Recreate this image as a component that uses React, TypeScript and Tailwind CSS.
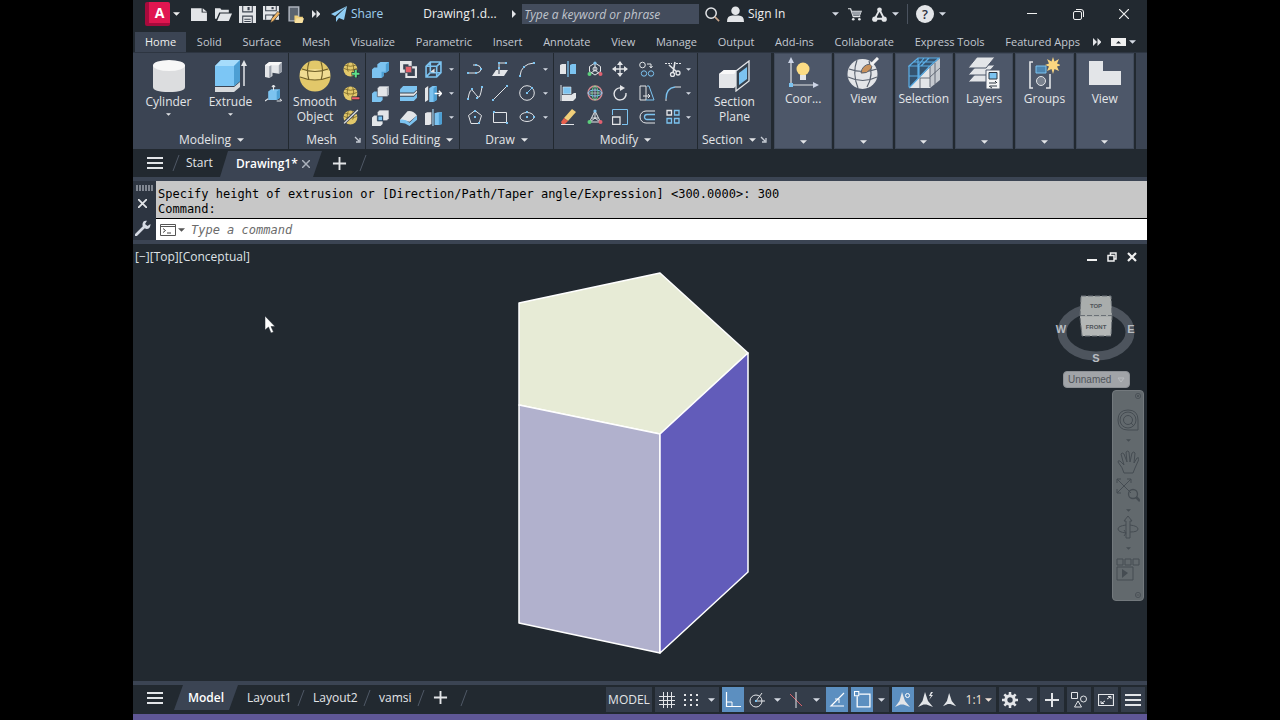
import { useState } from "react";
import type { ReactNode } from "react";
import clsx from "clsx";

interface IconProps {
  children: ReactNode;
  className?: string;
  box?: string;
}

interface ToolItem {
  label: string;
  icon: ReactNode;
}

const LIGHT = "#e3e5e8";
const BLUE = "#7cc3f0";
const GOLD = "#e2c86a";

function Icon({ children, className = "size-4", box = "0 0 16 16" }: IconProps) {
  return (
    <svg viewBox={box} className={clsx("shrink-0", className)} fill="none" stroke="none" aria-hidden="true">
      {children}
    </svg>
  );
}

function Caret({ className = "w-[5px] h-[3px]" }: { className?: string }) {
  return (
    <svg viewBox="0 0 8 4" className={clsx("shrink-0", className)} fill="currentColor" aria-hidden="true">
      <path d="M0 0h8L4 4z" />
    </svg>
  );
}

function CaretButton({ label, className }: { label: string; className?: string }) {
  return (
    <button aria-label={label} className={clsx("flex items-center justify-center text-[#d5dae3]", className)}>
      <Caret className="h-1 w-[7px]" />
    </button>
  );
}

function Slash({ className = "h-5" }: { className?: string }) {
  return (
    <svg viewBox="0 0 8 20" className={clsx("w-2 shrink-0", className)} fill="none" stroke="#4f5866" aria-hidden="true">
      <path d="M7 2L1 18" />
    </svg>
  );
}

function Plus({ className = "size-[15px]" }: { className?: string }) {
  return (
    <Icon className={className}>
      <path d="M8 1v14M1 8h14" stroke="#e3e5e8" strokeWidth="2" />
    </Icon>
  );
}

function MenuLines({ className = "size-4" }: { className?: string }) {
  return (
    <Icon className={className}>
      <path d="M0 3h16M0 8h16M0 13h16" stroke="#e3e5e8" strokeWidth="2" />
    </Icon>
  );
}

const dots = (points: number[][]) =>
  points.map(([x, y]) => <rect key={`${x}-${y}`} x={x - 1} y={y - 1} width="2" height="2" fill={BLUE} />);

const globe = (
  <>
    <circle cx="7" cy="8" r="6.5" fill={GOLD} />
    <path d="M1 7q6 3 12 0M2 4q5 2 10 0M5 2q-2 5 0 8M9 2q2 5 0 8" stroke="#7d6a2a" strokeWidth=".8" />
  </>
);

const QUICK_ACCESS: ToolItem[] = [
  {
    label: "New",
    icon: (
      <Icon className="size-[17px]">
        <path d="M0 2h10v4h5v8H0z" fill={LIGHT} />
        <path d="M11 2l4 3.500h-4z" fill={LIGHT} />
      </Icon>
    ),
  },
  {
    label: "Open",
    icon: (
      <Icon className="size-[17px]">
        <path d="M0 2h5l1 1.500h7V6H4l-2.500 6L0 12z" fill={LIGHT} />
        <path d="M5 7h11l-3 7H2z" fill={LIGHT} />
      </Icon>
    ),
  },
  {
    label: "Save",
    icon: (
      <Icon className="size-[17px]">
        <path d="M0 0h16v16H0z" fill={LIGHT} />
        <path d="M3 0h10v6H3zM3 9h10v7H3z" fill="#3a424e" />
        <path d="M4 0h8v5H4zM4 10h8v6H4z" fill={LIGHT} />
        <path d="M8 1h2v3H8zM5 12h6v1H5zM5 14h6v1H5z" fill="#3a424e" />
      </Icon>
    ),
  },
  {
    label: "Save As",
    icon: (
      <Icon className="size-[17px]">
        <path d="M0 0h15v13H0z" fill={LIGHT} />
        <path d="M2 0h11v5H2zM2 8h10v5H2z" fill="#3a424e" />
        <path d="M3 0h9v4H3zM3 9h6v4H3z" fill={LIGHT} />
        <path d="M8 1h2v2H8z" fill="#3a424e" />
        <path d="M14 5l2 2-6 7-3 2 1-4z" fill="#f0b566" stroke="#222930" strokeWidth=".6" />
      </Icon>
    ),
  },
  {
    label: "Open from Web & Mobile",
    icon: (
      <Icon className="size-[17px]">
        <path d="M2 1h9v13H2z" fill="#5b646f" stroke="#aeb4bd" strokeWidth="1.400" />
        <path d="M7 9h3l1 1h4v5H7z" fill="#f0d07a" />
        <path d="M9 11.500h7L14.500 16H7z" fill="#f7e0a0" />
      </Icon>
    ),
  },
];

const MENU_TABS = [
  "Home",
  "Solid",
  "Surface",
  "Mesh",
  "Visualize",
  "Parametric",
  "Insert",
  "Annotate",
  "View",
  "Manage",
  "Output",
  "Add-ins",
  "Collaborate",
  "Express Tools",
  "Featured Apps",
];

const MODELING_SMALL: ToolItem[] = [
  {
    label: "Polysolid",
    icon: (
      <Icon className="size-[17px]">
        <path d="M0 4l4-3h12v9l-3 2-6-1v3l-3 2-4-1z" fill={LIGHT} />
        <path d="M0 4l4-3h12l-3 3H6L4 5z" fill="#f7f7f7" />
        <path d="M4 5l2-1v10l-2 2zM13 4l3-3v9l-3 2z" fill="#9ba1ab" />
      </Icon>
    ),
  },
  {
    label: "Presspull",
    icon: (
      <Icon className="size-[17px]">
        <path d="M3 6l3-2h8v8l-3 2H3z" fill={BLUE} />
        <path d="M11 6l3-2v8l-3 2z" fill="#4d9fd3" />
        <path d="M8 5V0M6.500 2L8 0l1.500 2M0 15l3-2M11 15h4M14 13l2 2" stroke={LIGHT} />
      </Icon>
    ),
  },
];

const MESH_SMALL: ToolItem[] = [
  {
    label: "Smooth More",
    icon: (
      <Icon className="size-[17px]">
        {globe}
        <path d="M12 8v8M8 12h8" stroke="#222930" strokeWidth="3.500" />
        <path d="M12 8.500v7M8.500 12h7" stroke="#5fe08a" strokeWidth="2" />
      </Icon>
    ),
  },
  {
    label: "Smooth Less",
    icon: (
      <Icon className="size-[17px]">
        {globe}
        <path d="M8 12.500h8" stroke="#222930" strokeWidth="3.500" />
        <path d="M8.500 12.500h7" stroke="#f0606c" strokeWidth="2" />
      </Icon>
    ),
  },
  {
    label: "Refine Mesh",
    icon: (
      <Icon className="size-[17px]">
        {globe}
        <path d="M0 14L14 1" stroke="#3b4453" strokeWidth="3" />
        <path d="M1 13.500L14 1" stroke={LIGHT} strokeWidth="1.200" />
      </Icon>
    ),
  },
];

const SOLID_TOOLS: ToolItem[][] = [
  [
    {
      label: "Union",
      icon: (
        <Icon className="size-[17px]">
          <path d="M0 8l2-2h3V3l3-2h8v8l-3 2h-2v3l-2 2H0z" fill={BLUE} />
          <path d="M13 3l3-2v8l-3 2h-2v3l-2 2v-6h4z" fill="#4d9fd3" />
        </Icon>
      ),
    },
    {
      label: "Interfere",
      icon: (
        <Icon className="size-[17px]">
          <path d="M0 0h11v11H0zM3 3v5h5V3z" fill={LIGHT} fillRule="evenodd" />
          <path d="M6 6h9v9H6z" stroke={LIGHT} strokeWidth="2" />
          <path d="M5 5h6v6H5z" fill="#e4606a" stroke="#3b4453" strokeWidth=".8" />
        </Icon>
      ),
    },
    {
      label: "Extract Edges",
      icon: (
        <Icon className="size-[17px]">
          <path d="M1 5l4-4h10v10l-4 4H1zM1 5h10v10M11 5l4-4M5 1v9M5 11h10M5 11l-4 4" stroke={BLUE} strokeWidth="1.500" />
          <path d="M5 10l4-3v4z" fill={LIGHT} />
        </Icon>
      ),
    },
  ],
  [
    {
      label: "Subtract",
      icon: (
        <Icon className="size-[17px]">
          <path d="M0 8l2-2h8v8l-2 2H0z" fill={BLUE} />
          <path d="M5 3l2-2h9v8l-2 2H5z" fill={LIGHT} stroke="#3b4453" strokeWidth=".6" />
          <path d="M14 3l2-2v8l-2 2z" fill="#aab0b9" />
        </Icon>
      ),
    },
    {
      label: "Slice",
      icon: (
        <Icon className="size-[17px]">
          <path d="M0 4l3-3h13v3l-3 3H0z" fill={BLUE} />
          <path d="M0 8h13l3-3v2l-3 3H0z" fill={LIGHT} />
          <path d="M0 11h13l3-3v4l-3 3H0z" fill={BLUE} />
        </Icon>
      ),
    },
    {
      label: "Extrude Faces",
      icon: (
        <Icon className="size-[17px]">
          <path d="M0 3l3-2v13l-3 2z" fill={LIGHT} />
          <path d="M4 3l3-2h4v13l-3 2H4z" fill={BLUE} />
          <path d="M8 3l3-2v13l-3 2z" fill="#4d9fd3" />
          <path d="M9 8h6M13 5.500L15.500 8 13 10.500" stroke="#fff" strokeWidth="1.400" />
        </Icon>
      ),
    },
  ],
  [
    {
      label: "Intersect",
      icon: (
        <Icon className="size-[17px]">
          <path d="M0 8l2-2h8v8l-2 2H0z" fill={LIGHT} />
          <path d="M5 3l2-2h9v8l-2 2H5z" fill={LIGHT} stroke="#3b4453" strokeWidth=".6" />
          <path d="M5.500 6.500H10V11H5.500z" fill={BLUE} stroke="#25405a" />
        </Icon>
      ),
    },
    {
      label: "Thicken",
      icon: (
        <Icon className="size-[17px]">
          <path d="M0 10l7-8q5-1 9 4l-7 6z" fill={LIGHT} />
          <path d="M0 10q5-1 9 3l7-7v4l-7 6q-4-3-9-3z" fill={BLUE} />
        </Icon>
      ),
    },
    {
      label: "Separate",
      icon: (
        <Icon className="size-[17px]">
          <path d="M0 4l2-1h4v11l-2 1H0z" fill={LIGHT} />
          <path d="M9 4l3-1h4v11l-3 1H9z" fill={BLUE} />
          <path d="M7.500 0v16" stroke="#aee0ff" />
          <path d="M13 4l3-1v11l-3 1z" fill="#4d9fd3" />
        </Icon>
      ),
    },
  ],
];

const DRAW_TOOLS: ToolItem[][] = [
  [
    {
      label: "Polyline",
      icon: (
        <Icon>
          <path d="M1 12h9q4-1 4-4t-4-4H6" stroke={LIGHT} />
          {dots([[1, 12], [9, 12], [14, 8], [9, 4]])}
        </Icon>
      ),
    },
    {
      label: "3D Polyline",
      icon: (
        <Icon>
          <path d="M4 9h12l-4 6H0z" fill={LIGHT} />
          <path d="M7 12V2h8" stroke={LIGHT} />
          <path d="M7 9v4" stroke="#3b4453" />
          {dots([[7, 2], [14, 2], [7, 7]])}
        </Icon>
      ),
    },
    {
      label: "Arc",
      icon: (
        <Icon>
          <path d="M1 15Q2 3 15 2" stroke={LIGHT} />
          {dots([[1, 15], [5, 6], [15, 2]])}
        </Icon>
      ),
    },
  ],
  [
    {
      label: "Spline",
      icon: (
        <Icon>
          <path d="M1 14Q3 2 6 6t5 6 4-10" stroke={LIGHT} />
          {dots([[1, 14], [5, 4], [10, 13], [15, 2]])}
        </Icon>
      ),
    },
    {
      label: "Line",
      icon: (
        <Icon>
          <path d="M1 15L15 1" stroke={LIGHT} />
          {dots([[1, 15], [15, 1]])}
        </Icon>
      ),
    },
    {
      label: "Circle",
      icon: (
        <Icon>
          <circle cx="8" cy="8" r="7.300" stroke={LIGHT} />
          <path d="M8 8l4-4" stroke={BLUE} />
          {dots([[8, 8], [13, 3]])}
        </Icon>
      ),
    },
  ],
  [
    {
      label: "Polygon",
      icon: (
        <Icon>
          <path d="M8 1.500l6.500 5-2.500 8H4L1.500 6.500z" stroke={LIGHT} />
          {dots([[8, 2], [8, 8], [12, 14]])}
        </Icon>
      ),
    },
    {
      label: "Rectangle",
      icon: (
        <Icon>
          <path d="M1.500 3.500h13v10h-13z" stroke={LIGHT} />
          {dots([[2, 3], [15, 14]])}
        </Icon>
      ),
    },
    {
      label: "Ellipse",
      icon: (
        <Icon>
          <ellipse cx="8" cy="8" rx="7" ry="4.500" stroke={LIGHT} />
          {dots([[8, 8], [8, 3], [15, 8]])}
        </Icon>
      ),
    },
  ],
];

const MODIFY_TOOLS: ToolItem[][] = [
  [
    {
      label: "3D Mirror",
      icon: (
        <Icon>
          <path d="M0 4l2-1h4v10H0z" fill={LIGHT} />
          <path d="M10 4l2-1h4v10h-6z" fill={BLUE} />
          <path d="M8 0v16" stroke={BLUE} strokeWidth="1.300" />
        </Icon>
      ),
    },
    {
      label: "3D Move",
      icon: (
        <Icon>
          <path d="M8 2l5.500 3.500v5L8 14l-5.500-3.500v-5zM8 2v7M8 9l-5 4M8 9l5 4" stroke={LIGHT} />
          <circle cx="8" cy="2" r="1.600" fill={BLUE} />
          <circle cx="2.500" cy="13" r="2" fill="#5bcf7b" />
          <circle cx="13.500" cy="13" r="2" fill="#e06070" />
          <circle cx="8" cy="8" r="2" stroke={LIGHT} />
        </Icon>
      ),
    },
    {
      label: "Move",
      icon: (
        <Icon>
          <path d="M8 1v14M1 8h14" stroke={LIGHT} strokeWidth="1.300" />
          <path d="M8 0l3 4H5zM8 16l3-4H5zM0 8l4-3v6zM16 8l-4-3v6z" fill={LIGHT} />
        </Icon>
      ),
    },
    {
      label: "Copy",
      icon: (
        <Icon>
          <circle cx="3.500" cy="4" r="2.800" stroke={LIGHT} />
          <circle cx="5" cy="12.500" r="2.700" stroke={BLUE} />
          <circle cx="12" cy="12.500" r="2.700" stroke={BLUE} />
          <path d="M8 3h4v3M10.500 5l1.500 2 1.500-2" stroke={LIGHT} />
        </Icon>
      ),
    },
    {
      label: "Trim",
      icon: (
        <Icon>
          <path d="M0 2.500h7M11 2.500h5" stroke={LIGHT} strokeDasharray="2 1" />
          <path d="M4 4l8 7M10 1L8 12" stroke={LIGHT} strokeWidth="1.600" />
          <circle cx="7.500" cy="13.500" r="2" stroke={LIGHT} strokeWidth="1.300" />
          <circle cx="13" cy="12" r="2" stroke={LIGHT} strokeWidth="1.300" />
        </Icon>
      ),
    },
  ],
  [
    {
      label: "3D Align",
      icon: (
        <Icon>
          <path d="M1 0v16" stroke={LIGHT} />
          <path d="M3 2h8v7H3z" fill={BLUE} stroke={LIGHT} strokeWidth=".6" />
          <path d="M2 10h9l3-2h2v5l-3 3H2z" fill={LIGHT} />
        </Icon>
      ),
    },
    {
      label: "3D Rotate",
      icon: (
        <Icon>
          <circle cx="8" cy="8" r="7" stroke="#d58a90" strokeWidth="1.300" />
          <ellipse cx="8" cy="8" rx="3" ry="7" stroke="#5bcf7b" />
          <ellipse cx="8" cy="8" rx="7" ry="3" stroke={BLUE} />
          <path d="M8 1v14M1 8h14" stroke={LIGHT} strokeWidth=".6" />
        </Icon>
      ),
    },
    {
      label: "Rotate",
      icon: (
        <Icon>
          <path d="M9 3A6 6 0 1 0 14 8" stroke={LIGHT} strokeWidth="1.400" />
          <path d="M8 0l5 3-5 3z" fill={LIGHT} />
        </Icon>
      ),
    },
    {
      label: "Stretch",
      icon: (
        <Icon>
          <path d="M1 1h6v14H1z" stroke={LIGHT} />
          <path d="M8 1h2l5 14H7" stroke={BLUE} />
          <path d="M4 11h7M9 9l2 2-2 2" stroke={LIGHT} />
        </Icon>
      ),
    },
    {
      label: "Fillet",
      icon: (
        <Icon>
          <path d="M1 14Q1 3 10 2" stroke={BLUE} strokeWidth="1.300" />
          <path d="M1 14v2M10 2h6" stroke={LIGHT} />
        </Icon>
      ),
    },
  ],
  [
    {
      label: "Erase",
      icon: (
        <Icon>
          <path d="M12 0l4 3-8 9-4-3z" fill="#f1cf7a" />
          <path d="M4 9l4 3-3 3H2l-1-2z" fill="#e8604c" />
          <path d="M1 15.500h13" stroke={LIGHT} />
        </Icon>
      ),
    },
    {
      label: "3D Scale",
      icon: (
        <Icon>
          <path d="M8 2L2.500 13h11zM8 2v7M8 9l-5 4M8 9l5 4M5 9h6" stroke={LIGHT} />
          <circle cx="8" cy="2" r="1.600" fill={BLUE} />
          <circle cx="2.500" cy="13" r="2" fill="#5bcf7b" />
          <circle cx="13.500" cy="13" r="2" fill="#e06070" />
        </Icon>
      ),
    },
    {
      label: "Scale",
      icon: (
        <Icon>
          <path d="M.5 6V.5h15v15H10" stroke={BLUE} />
          <path d="M.5 8h7.500v7.500H.5z" stroke={LIGHT} strokeWidth="1.300" />
        </Icon>
      ),
    },
    {
      label: "Offset",
      icon: (
        <Icon>
          <path d="M16 2H7a6 6 0 0 0 0 12h9" stroke={LIGHT} />
          <path d="M16 5.500H8a2.500 2.500 0 0 0 0 5h8" stroke={BLUE} strokeWidth="1.300" />
        </Icon>
      ),
    },
    {
      label: "Array",
      icon: (
        <Icon>
          <path d="M2 1.500h4.500V6H2z" stroke={LIGHT} strokeWidth="1.300" />
          <path d="M9.500 1.500H14V6H9.500zM2 9.500h4.500V14H2zM9.500 9.500H14V14H9.500z" stroke={BLUE} strokeWidth="1.300" />
        </Icon>
      ),
    },
  ],
];

const COLLAPSED_PANELS: ToolItem[] = [
  {
    label: "Coor...",
    icon: (
      <Icon className="size-8" box="0 0 32 32">
        <path d="M4 28V4M4 28h25" stroke={LIGHT} strokeWidth="1.200" />
        <path d="M4 0l3 6H1zM32 28l-6-3v6z" fill="#cdd5e6" />
        <path d="M2 26h4v4H2z" fill={BLUE} />
        <circle cx="16" cy="12" r="6.500" fill="#fcdc84" />
        <path d="M13 18h6v5h-6z" fill={LIGHT} />
      </Icon>
    ),
  },
  {
    label: "View",
    icon: (
      <Icon className="size-8" box="0 0 32 32">
        <circle cx="15.500" cy="17" r="15" fill={LIGHT} />
        <path d="M2 12q14 5 28 0M1 20q15 7 29 0M10 3q-5 13 1 28M22 4q5 14-2 26" stroke="#59616e" strokeWidth="1.200" />
        <path d="M14 16q1-8 9-9 3 2 1 5-4 5-10 4z" fill="#c9925c" stroke="#59616e" />
        <path d="M24 8l7-7" stroke="#f4f4f4" strokeWidth="3" />
      </Icon>
    ),
  },
  {
    label: "Selection",
    icon: (
      <Icon className="size-8" box="0 0 32 32">
        <path d="M1 9l9-8h21l-9 8-21 22z" fill="#35536f" />
        <path d="M1 31L22 10v21z" fill={LIGHT} />
        <path d="M22 10l10-9v22l-10 8z" fill="#c5c9cf" />
        <path d="M1 9l9-8h21l-9 8zM1 9v21M11 9v12M22 9L1 31M1 19h11M5 5h21M16 1l-6 8M21 1l-8 8M10 1v21" stroke="#5caee6" strokeWidth="1.200" />
        <path d="M22 10v20M12 21h10M12 21v10M22 20l10-9M27 6v21" stroke="#59616e" strokeWidth=".9" />
      </Icon>
    ),
  },
  {
    label: "Layers",
    icon: (
      <Icon className="size-8" box="0 0 32 32">
        <path d="M9 15h18l-9 10H0z" fill={LIGHT} stroke="#4d5769" />
        <path d="M9 8h18l-9 10H0z" fill={LIGHT} stroke="#4d5769" />
        <path d="M9 0h18l-9 11H0z" fill={LIGHT} stroke="#4d5769" />
        <path d="M18 13h14v19H18z" fill="#f4f5f6" stroke="#4d5769" />
        <path d="M21 15.500h8V22h-8z" fill={BLUE} stroke="#2b3440" />
        <path d="M21 26h7M27 24l2 2M22 29h7M24 31l-3-2" stroke="#2b3440" />
      </Icon>
    ),
  },
  {
    label: "Groups",
    icon: (
      <Icon className="size-8" box="0 0 32 32">
        <path d="M5 5H2v26h3M18 31h4V17" stroke={LIGHT} strokeWidth="1.600" />
        <path d="M8 9h10v7H8z" fill="#4d85b0" stroke={BLUE} />
        <circle cx="13" cy="24" r="4.500" fill="#7a828f" stroke={LIGHT} />
        <path d="M25 0l1.500 4.500L31 2l-2 4.500 4 1.500-4 1.500 2 4.500-4.500-2L25 17l-1.500-5L19 14l2-4.500L17 8l4-1.500L19 2l4.500 2.500z" fill="#fbd680" />
      </Icon>
    ),
  },
  {
    label: "View",
    icon: (
      <Icon className="size-8" box="0 0 32 32">
        <path d="M0 4h14v10h18v14H0z" fill={LIGHT} />
      </Icon>
    ),
  },
];

function ToolGrid({ rows, columns }: { rows: ToolItem[][]; columns: string }) {
  return (
    <div className="flex flex-col">
      {rows.map((row) => (
        <div key={row[0].label} className={clsx("grid h-6 items-center justify-items-center", columns)}>
          {row.map((tool) => (
            <button key={tool.label} aria-label={tool.label}>
              {tool.icon}
            </button>
          ))}
          <button aria-label={`More like ${row[row.length - 1].label}`} className="text-[#d5dae3]">
            <Caret />
          </button>
        </div>
      ))}
    </div>
  );
}

function SmallColumn({ tools }: { tools: ToolItem[] }) {
  return (
    <div className="flex w-6 flex-col">
      {tools.map((tool) => (
        <button key={tool.label} aria-label={tool.label} className="flex h-6 items-center justify-center">
          {tool.icon}
        </button>
      ))}
    </div>
  );
}

interface PanelProps {
  title: string;
  children: ReactNode;
  className?: string;
  expandable?: boolean;
  launcher?: boolean;
}

function Panel({ title, children, className, expandable, launcher }: PanelProps) {
  return (
    <section className={clsx("flex shrink-0 flex-col justify-between bg-[#3b4453] pt-1", className)}>
      <div className="flex justify-center">{children}</div>
      <div className="flex h-[19px] items-center">
        <button className="flex flex-1 items-center justify-center gap-[6px] whitespace-nowrap text-[#e3e5e8]">
          {title}
          {expandable && <Caret className="h-1 w-[7px]" />}
        </button>
        {launcher && (
          <button aria-label={`${title} settings`} className="pr-1">
            <Icon className="size-[7px]" box="0 0 7 7">
              <path d="M1 1l4 4M6 2v4H2" stroke="#c8cdd6" strokeWidth="1.300" />
            </Icon>
          </button>
        )}
      </div>
    </section>
  );
}

function BigTool({ label, icon, className, menu }: ToolItem & { className?: string; menu?: boolean }) {
  return (
    <button className={clsx("flex flex-col items-center pt-[3px] text-[#e3e5e8]", className)}>
      {icon}
      <span className="mt-[2px] leading-[15px]">{label}</span>
      {menu && <Caret className="mt-1 h-[3px] w-[5px]" />}
    </button>
  );
}

function TitleBar() {
  return (
    <header className="flex h-8 items-center pb-1 text-[#f0f0f0]">
      <button aria-label="Application menu" className="ml-3 flex w-9 items-center gap-[3px]">
        <span className="flex h-6 w-[25px] items-center justify-center rounded-xs border-b-3 border-l-4 border-[#a80a3c] bg-[#e01650] text-[14px] leading-none font-bold text-white">
          A
        </span>
        <Caret className="h-1 w-[7px]" />
      </button>
      <div className="ml-[6px] flex">
        {QUICK_ACCESS.map((tool) => (
          <button key={tool.label} aria-label={tool.label} className="flex w-6 justify-center">
            {tool.icon}
          </button>
        ))}
      </div>
      <button aria-label="More quick access tools" className="flex w-[18px] justify-center">
        <Icon className="size-2" box="0 0 8 8">
          <path d="M0 0l4 4-4 4zM4.500 0l4 4-4 4z" fill={LIGHT} />
        </Icon>
      </button>
      <button className="ml-[6px] flex items-center gap-1 text-[#9fd0f0]">
        <Icon>
          <path d="M16 0L0 8l4 2zM16 0L5 11v5l3-4 5 2z" fill="#8fcdf4" />
        </Icon>
        Share
      </button>
      <h1 className="ml-10 w-[87px] truncate">Drawing1.d...</h1>
      <button aria-label="Show search" className="w-3">
        <Icon className="size-2" box="0 0 8 8">
          <path d="M2 0l4 4-4 4z" fill={LIGHT} />
        </Icon>
      </button>
      <input
        type="search"
        aria-label="Keyword search"
        placeholder="Type a keyword or phrase"
        className="h-5 min-w-0 flex-1 bg-[#434c5c] px-[2px] italic outline-none placeholder:text-[#c0c5cd]"
      />
      <button aria-label="Search" className="flex w-[26px] justify-center">
        <Icon className="size-[15px]">
          <circle cx="6.500" cy="6.500" r="5.500" stroke={LIGHT} strokeWidth="1.600" />
          <path d="M10.500 10.500L15 15" stroke="#c9a68c" strokeWidth="1.800" />
        </Icon>
      </button>
      <button className="ml-[2px] flex w-[100px] items-center gap-1">
        <Icon className="size-[17px]">
          <circle cx="8" cy="4.500" r="4" fill={LIGHT} />
          <path d="M0 15q0-6 5-6h6q5 0 5 6z" fill={LIGHT} />
        </Icon>
        Sign In
      </button>
      <CaretButton label="Account options" className="w-4" />
      <button aria-label="App store" className="flex w-6 justify-center">
        <Icon className="size-[14px]">
          <path d="M0 2h3l3 9h8M4 5h11l-2 5" stroke={LIGHT} strokeWidth="1.400" />
          <path d="M4 5h11l-2 5H6z" fill="#9aa0a8" />
          <circle cx="6" cy="14" r="1.500" fill={LIGHT} />
          <circle cx="13" cy="14" r="1.500" fill={LIGHT} />
        </Icon>
      </button>
      <button aria-label="Autodesk services" className="flex w-6 justify-center">
        <Icon className="size-[15px]">
          <path d="M8 3L3 12.500h10z" stroke={LIGHT} strokeWidth="2" />
          <circle cx="8" cy="3" r="2.500" fill={LIGHT} />
          <circle cx="3" cy="13" r="2.800" fill={LIGHT} />
          <circle cx="13" cy="13" r="2.800" fill={LIGHT} />
        </Icon>
      </button>
      <CaretButton label="Services options" className="w-2" />
      <span className="mx-2 h-5 w-px bg-[#4a525e]" />
      <button aria-label="Help" className="flex size-[18px] items-center justify-center rounded-full bg-[#e3e5e8] text-[13px] font-semibold text-[#2b323c]">
        ?
      </button>
      <CaretButton label="Help options" className="w-4" />
      <div className="ml-[59px] flex">
        <button aria-label="Minimize" className="flex w-[46px] justify-center">
          <Icon className="size-[10px]" box="0 0 10 10">
            <path d="M0 4.500h10" stroke="#f0f0f0" />
          </Icon>
        </button>
        <button aria-label="Restore" className="flex w-[46px] justify-center">
          <Icon className="size-[11px]" box="0 0 11 11">
            <rect x=".5" y="2.500" width="8" height="8" rx="1.500" stroke="#f0f0f0" />
            <path d="M3 .5h5q2.500 0 2.500 2.500v5" stroke="#f0f0f0" />
          </Icon>
        </button>
        <button aria-label="Close" className="flex w-[46px] justify-center">
          <Icon className="size-[10px]" box="0 0 10 10">
            <path d="M0 0l10 10M10 0L0 10" stroke="#f0f0f0" strokeWidth="1.200" />
          </Icon>
        </button>
      </div>
    </header>
  );
}

function Ribbon() {
  return (
    <div className="flex h-[97px] gap-px border-t border-[#2d3541] bg-[#222930]">
      <Panel title="Modeling" className="w-[155px] pl-[2px]" expandable>
        <BigTool
          label="Cylinder"
          className="w-[62px]"
          menu
          icon={
            <Icon className="size-8" box="0 0 32 32">
              <path d="M0 5v22q0 5 16 5t16-5V5z" fill="#dcdddf" />
              <ellipse cx="16" cy="5.500" rx="16" ry="5.500" fill="#f7f7f7" />
            </Icon>
          }
        />
        <BigTool
          label="Extrude"
          className="w-[62px]"
          menu
          icon={
            <Icon className="size-8" box="0 0 32 32">
              <path d="M0 27h19l6-5v5l-6 5H0z" fill="#d8dadd" />
              <path d="M0 6l6-6h19v21l-6 5H0z" fill="#7cc6f5" />
              <path d="M0 6l6-6h19l-6 6z" fill="#a6dcfb" />
              <path d="M19 6l6-6v21l-6 5z" fill="#4d9fd3" />
              <path d="M29 26V2" stroke={LIGHT} strokeWidth="1.500" />
              <path d="M29 0l3 6h-6z" fill={LIGHT} />
            </Icon>
          }
        />
        <SmallColumn tools={MODELING_SMALL} />
      </Panel>
      <Panel title="Mesh" className="w-[76px]" launcher>
        <BigTool
          label="Smooth Object"
          className="w-12"
          icon={
            <Icon className="size-8" box="0 0 32 32">
              <circle cx="16" cy="16" r="15.500" fill={GOLD} />
              <path d="M1 11q15-4 30 0v6q-15 5-30 1z" fill="#f0dc92" />
              <path d="M1 17q15 6 30 0M3 9q13 5 26 0M10 2q-3 9 0 18M22 2q3 9 0 18" stroke="#6f5f28" strokeWidth="1.100" />
            </Icon>
          }
        />
        <SmallColumn tools={MESH_SMALL} />
      </Panel>
      <Panel title="Solid Editing" className="w-[93px]" expandable>
        <ToolGrid rows={SOLID_TOOLS} columns="grid-cols-[28px_28px_22px_14px]" />
      </Panel>
      <Panel title="Draw" className="w-[93px]" expandable>
        <ToolGrid rows={DRAW_TOOLS} columns="grid-cols-[28px_22px_32px_6px_4px]" />
      </Panel>
      <Panel title="Modify" className="w-[143px]" expandable>
        <ToolGrid rows={MODIFY_TOOLS} columns="grid-cols-[28px_26px_24px_30px_22px_8px_5px]" />
      </Panel>
      <Panel title="Section" className="w-[73px]" expandable launcher>
        <BigTool
          label="Section Plane"
          className="w-14"
          icon={
            <Icon className="size-8" box="0 0 32 32">
              <path d="M0 14l5-4h14v14l-4 4H0z" fill={LIGHT} />
              <path d="M0 14l5-4h14l-4 4z" fill="#f8f8f8" />
              <path d="M17 11L30 1v20L17 31z" fill="#35424f" stroke={LIGHT} strokeWidth="1.300" />
              <path d="M20 13l8-6v12l-8 6z" fill={BLUE} />
            </Icon>
          }
        />
      </Panel>
      <div className="flex flex-1 gap-[2px] pl-[2px]">
        {COLLAPSED_PANELS.map((panel, index) => (
          <button
            key={index}
            className="flex min-w-0 flex-1 flex-col items-center border border-[#414b5b] bg-[#4d5769] pt-[3px] text-[#e3e5e8]"
          >
            {panel.icon}
            <span className="mt-[2px] leading-[15px]">{panel.label}</span>
            <Caret className="mt-auto mb-1 h-1 w-[7px]" />
          </button>
        ))}
        <span className="w-[11px] bg-[#3b4453]" />
      </div>
    </div>
  );
}

function FileTabs() {
  return (
    <nav aria-label="Open files" className="flex h-7 items-center text-[#e3e5e8]">
      <button aria-label="File tab menu" className="ml-[14px]">
        <MenuLines />
      </button>
      <span className="ml-[9px]">
        <Slash />
      </span>
      <button className="ml-[6px] w-[34px] text-left">Start</button>
      <div className="flex h-[26px] items-center self-end bg-[#3b4453] pr-3 pl-4 [clip-path:polygon(8px_0,100%_0,calc(100%-9px)_100%,0_100%)]">
        <button className="w-[60px] font-semibold whitespace-nowrap text-white">Drawing1*</button>
        <button aria-label="Close Drawing1" className="ml-[6px]">
          <Icon className="size-2" box="0 0 8 8">
            <path d="M0 0l8 8M8 0L0 8" stroke="#aab1bc" strokeWidth="1.500" />
          </Icon>
        </button>
      </div>
      <button aria-label="New tab" className="mr-3 ml-[10px]">
        <Plus />
      </button>
      <Slash />
    </nav>
  );
}

function CommandLine() {
  const [command, setCommand] = useState("");

  return (
    <section aria-label="Command line" className="flex h-[63px] border-t-4 border-[#3b4453] bg-[#2d3541] font-['DejaVu_Sans_Mono','Liberation_Mono',monospace] text-[12px]">
      <div className="flex w-[23px] flex-col items-center pt-1">
        <Icon className="h-[6px] w-[18px]" box="0 0 18 6">
          <path d="M0 1h18M0 3h18M0 5h18" stroke="#d5dae3" strokeDasharray="2 1" />
        </Icon>
        <button aria-label="Close command line" className="mt-2 mr-1">
          <Icon className="size-[9px]" box="0 0 9 9">
            <path d="M0 0l9 9M9 0L0 9" stroke="#e3e5e8" strokeWidth="1.800" />
          </Icon>
        </button>
        <button aria-label="Customize" className="mt-3 mr-1">
          <Icon>
            <path d="M1 15l8-8" stroke="#d5dae3" strokeWidth="2.600" strokeLinecap="round" />
            <path d="M15.500 4l-3 2-2.500-2L12 .8Q8 0 7.500 4t4 5q4 0 4-5z" fill="#d5dae3" />
          </Icon>
        </button>
      </div>
      <div className="flex min-w-0 flex-1 flex-col bg-[#c7c7c7]">
        <div className="h-[38px] overflow-hidden border-b border-black px-[2px] pt-[6px] leading-[15px] whitespace-nowrap text-black">
          <p>Specify height of extrusion or [Direction/Path/Taper angle/Expression] &lt;300.0000&gt;: 300</p>
          <p>Command:</p>
        </div>
        <div className="flex flex-1 items-center bg-white">
          <button aria-label="Recent commands" className="ml-1 flex items-center gap-[2px] text-[#555]">
            <Icon className="h-3 w-4" box="0 0 16 12">
              <path d="M.5.5h15v11H.5zM.5 2.500h15" stroke="#555" />
              <path d="M3 4.500l2.500 2L3 8.500M7 9h4" stroke="#444" />
            </Icon>
            <Caret className="h-1 w-[7px]" />
          </button>
          <input
            type="text"
            aria-label="Command"
            value={command}
            onChange={(e) => setCommand(e.target.value)}
            placeholder="Type a command"
            className="ml-[6px] min-w-0 flex-1 italic outline-none placeholder:text-[#6b6b6b]"
          />
        </div>
      </div>
    </section>
  );
}

function ViewCube() {
  return (
    <svg viewBox="0 0 84 72" className="h-[72px] w-[84px] font-['Liberation_Sans',sans-serif] font-bold" aria-label="View cube">
      <ellipse cx="42" cy="38" rx="34" ry="24" fill="none" stroke="#4d545d" strokeWidth="9" />
      <path d="M27 2h30l1 21H26z" fill="#a9adac" />
      <path d="M26 23h32l-1 19H28z" fill="#b4b7b6" />
      <path d="M27 2h30l1 21-1 19H28l-2-19zM26 21.500h32" fill="none" stroke="#6a7076" strokeDasharray="5 2" />
      <g fill="#4f5459" fontSize="6" textAnchor="middle">
        <text x="42" y="14">TOP</text>
        <text x="42" y="35">FRONT</text>
      </g>
      <g fill="#b9bdc2" fontSize="11" textAnchor="middle">
        <text x="7" y="39">W</text>
        <text x="77" y="39">E</text>
        <text x="42" y="68">S</text>
      </g>
    </svg>
  );
}

function NavigationBar() {
  return (
    <div className="flex h-[211px] w-8 flex-col items-center rounded-sm border border-[#73797d] bg-[#62696d] text-[#454c52]">
      <button aria-label="Close navigation bar" className="self-end p-[2px]">
        <Icon className="size-[6px]" box="0 0 8 8">
          <circle cx="4" cy="4" r="3.500" stroke="#454c52" />
          <path d="M2.500 2.500l3 3M5.500 2.500l-3 3" stroke="#454c52" />
        </Icon>
      </button>
      <button aria-label="Navigation wheel" className="mt-2">
        <Icon className="size-[22px]" box="0 0 22 22">
          <path d="M11 1Q1 1 1 11t10 10h10V11Q21 1 11 1z" stroke="#454c52" />
          <circle cx="11" cy="11" r="8" stroke="#454c52" />
          <circle cx="11" cy="11" r="4.500" stroke="#454c52" />
          <path d="M14 14l3 3" stroke="#454c52" />
        </Icon>
      </button>
      <Caret className="mt-2 h-[3px] w-[5px]" />
      <button aria-label="Pan" className="mt-2">
        <Icon className="h-6 w-[22px]" box="0 0 22 24">
          <path d="M7 23q-1-5-6-11 0-2 2-1l4 4L4 4q1-2 3 0l3 8-1-10q2-2 3 0l1 10 2-9q2-2 3 0l-1 10 3-5q2-1 2 1l-4 9-2 5z" stroke="#454c52" />
        </Icon>
      </button>
      <button aria-label="Zoom extents" className="mt-1">
        <Icon className="size-6" box="0 0 24 24">
          <path d="M1 1l14 14M15 1L1 15M1 5V1h4M11 1h4v4M1 11v4h4" stroke="#454c52" />
          <circle cx="17" cy="16" r="4.500" stroke="#454c52" strokeWidth="1.300" />
          <path d="M20 19l4 4" stroke="#454c52" strokeWidth="2.500" />
        </Icon>
      </button>
      <Caret className="mt-[7px] h-[3px] w-[5px]" />
      <button aria-label="Orbit" className="mt-1">
        <Icon className="h-6 w-[22px]" box="0 0 22 24">
          <path d="M9 22V5H7l4-5 4 5h-2v17z" stroke="#454c52" />
          <path d="M9 9Q1 10 1 13t8 4l-2-3M7 20l2-3M13 9q8 1 8 4t-8 3" stroke="#454c52" />
        </Icon>
      </button>
      <Caret className="mt-[7px] h-[3px] w-[5px]" />
      <button aria-label="ShowMotion" className="mt-2">
        <Icon className="size-6" box="0 0 24 24">
          <path d="M1 1h6v6H1zM9 1h6v6H9zM17 1h6v6h-6zM1 9h16v13H1z" stroke="#454c52" />
          <path d="M6 11l6 4-6 5z" fill="#454c52" />
        </Icon>
      </button>
      <button aria-label="Navigation bar options" className="mt-auto self-end p-[2px]">
        <Icon className="size-[6px]" box="0 0 8 8">
          <circle cx="4" cy="4" r="3.500" stroke="#454c52" />
          <path d="M2 4h4" stroke="#454c52" />
        </Icon>
      </button>
    </div>
  );
}

function Viewport() {
  return (
    <main className="relative flex min-h-[437px] flex-1 flex-col border-t-4 border-[#3b4453]">
      <div className="flex items-center justify-between pt-1 pr-[10px] pl-[2px] text-[#dfe2e6]">
        <button className="leading-[18px]">[−][Top][Conceptual]</button>
        <div className="flex gap-[10px]">
          <button aria-label="Minimize viewport">
            <Icon className="size-[10px]" box="0 0 10 10">
              <path d="M0 8h10" stroke="#f0f0f0" strokeWidth="2" />
            </Icon>
          </button>
          <button aria-label="Restore viewport">
            <Icon className="size-[10px]" box="0 0 10 10">
              <path d="M1 3.500h6V9H1zM3.500 3V1H9v6H7.500" stroke="#f0f0f0" strokeWidth="1.500" />
            </Icon>
          </button>
          <button aria-label="Close viewport">
            <Icon className="size-[10px]" box="0 0 10 10">
              <path d="M1 1l8 8M9 1L1 9" stroke="#f0f0f0" strokeWidth="2.200" />
            </Icon>
          </button>
        </div>
      </div>
      <div className="mt-7 flex flex-col items-end">
        <div className="mr-[9px]">
          <ViewCube />
        </div>
        <button className="mt-[5px] mr-[17px] flex h-[17px] w-[67px] items-center justify-between rounded-sm border border-[#8d9196] bg-[#a1a4a8] px-1 font-['Liberation_Sans',sans-serif] text-[10px] text-[#50555b]">
          Unnamed
          <svg viewBox="0 0 8 6" className="h-[6px] w-2" fill="none" stroke="#b9bcc0" aria-hidden="true">
            <path d="M1 1h6L4 5z" />
          </svg>
        </button>
        <div className="mt-[2px] mr-[3px]">
          <NavigationBar />
        </div>
      </div>

      {/* Extruded pentagon */}
      <svg viewBox="0 0 234 386" className="absolute top-[27px] left-[384px] h-[386px] w-[234px]" stroke="#ffffff" strokeWidth="1.500" strokeLinejoin="round" aria-label="Extruded pentagon">
        <path d="M2 32L143 2l88 80-88 81L2 134z" fill="#e7ebd6" />
        <path d="M2 134l141 29v219L2 352z" fill="#b1b1cd" />
        <path d="M143 163l88-81v219l-88 81z" fill="#625cba" />
      </svg>

      {/* Pointer */}
      <svg viewBox="0 0 12 19" className="absolute top-[71px] left-[131px] h-[19px] w-3" aria-hidden="true">
        <path d="M1 1v14l3.500-3 2.500 6 2.500-1L7 11.500h4z" fill="#fff" stroke="#222930" strokeWidth=".5" />
      </svg>
    </main>
  );
}

interface StatusToggleProps {
  label: string;
  children: ReactNode;
  active?: boolean;
  className?: string;
}

function StatusToggle({ label, children, active, className = "w-6" }: StatusToggleProps) {
  return (
    <button
      aria-label={label}
      aria-pressed={active}
      className={clsx("flex h-full items-center justify-center", className, active && "bg-[#5c8fc0]")}
    >
      {children}
    </button>
  );
}

const annotationArrow = <path d="M7 0l3 9 5 6-6.500-2.500h-3L0 15l4.500-6z" fill={LIGHT} />;

function StatusBar() {
  return (
    <footer className="flex h-[33px] items-center border-t-4 border-[#3b4453] text-[#e3e5e8]">
      <nav aria-label="Layouts" className="flex h-full items-center pb-1">
        <button aria-label="Layout menu" className="ml-[14px]">
          <MenuLines />
        </button>
        <button className="ml-[11px] flex h-[25px] w-16 items-center justify-center bg-[#3b4453] font-semibold text-white [clip-path:polygon(9px_0,100%_0,calc(100%-9px)_100%,0_100%)]">
          Model
        </button>
        <button className="ml-[9px] w-[46px] text-left">Layout1</button>
        <Slash className="mx-1 h-5" />
        <button className="ml-1 w-[46px] text-left">Layout2</button>
        <Slash className="mx-1 h-5" />
        <button className="ml-1 w-[38px] text-left">vamsi</button>
        <Slash className="h-5" />
        <button aria-label="New layout" className="mx-2">
          <Plus />
        </button>
        <Slash className="ml-1 h-5" />
      </nav>

      <div className="ml-auto flex h-[25px] gap-[3px] pr-[2px] [&>*]:bg-[#343d4a]">
        <button className="w-[46px]">MODEL</button>
        <div className="flex">
          <StatusToggle label="Grid">
            <Icon>
              <path d="M4.500 0v16M8.500 0v16M12.500 0v16M0 4.500h16M0 8.500h16M0 12.500h16" stroke={LIGHT} />
            </Icon>
          </StatusToggle>
          <StatusToggle label="Snap">
            <Icon>
              <path d="M1 3h14M1 8h14M1 13h14" stroke={LIGHT} strokeWidth="2" strokeDasharray="2 4" />
            </Icon>
          </StatusToggle>
          <CaretButton label="Snap settings" className="w-4" />
        </div>
        <div className="flex">
          <StatusToggle label="Ortho" active className="w-[22px]">
            <Icon>
              <path d="M1.500 0v14.500H16" stroke="#fff" strokeWidth="1.200" />
              <path d="M2 10h5v5" stroke="#fff" />
            </Icon>
          </StatusToggle>
          <StatusToggle label="Polar tracking" className="w-[26px]">
            <Icon>
              <circle cx="7" cy="9" r="6" stroke={LIGHT} />
              <path d="M7 9h9M7 9l6-8" stroke={LIGHT} />
              {dots([[7, 9]])}
            </Icon>
          </StatusToggle>
          <CaretButton label="Polar settings" className="w-[14px]" />
          <StatusToggle label="Isometric drafting">
            <Icon>
              <path d="M2 2l12 12" stroke="#d9606a" />
              <path d="M8 0v16" stroke={LIGHT} />
            </Icon>
          </StatusToggle>
          <CaretButton label="Isometric settings" className="w-4" />
          <StatusToggle label="Object snap tracking" active className="ml-[2px] w-[22px]">
            <Icon>
              <path d="M15 1L2 14h13" stroke="#fff" strokeWidth="1.200" />
              <path d="M6 7h4v4" stroke="#fff" />
            </Icon>
          </StatusToggle>
          <StatusToggle label="Object snap" active className="ml-[3px] w-[22px]">
            <Icon className="size-[17px]">
              <path d="M3 5v10h12V3H5" stroke="#fff" strokeWidth="1.200" />
              <path d="M.5.5h4v4h-4z" stroke="#fff" fill="#5c8fc0" />
            </Icon>
          </StatusToggle>
          <CaretButton label="Object snap settings" className="w-4" />
        </div>
        <div className="flex">
          <StatusToggle label="Annotation visibility" active className="w-[22px]">
            <Icon>
              {annotationArrow}
              <circle cx="12.500" cy="3.500" r="2" stroke="#fff" />
            </Icon>
          </StatusToggle>
          <StatusToggle label="Auto scale">
            <Icon>
              {annotationArrow}
              <path d="M13 0l-2 4h2l-2 4 4-5h-2l2-3z" fill={LIGHT} />
            </Icon>
          </StatusToggle>
          <StatusToggle label="Annotation scale">
            <Icon className="size-[14px]">{annotationArrow}</Icon>
          </StatusToggle>
          <button className="flex w-[34px] items-center justify-center gap-[3px] text-[#f0e2d8]">
            1:1
            <Caret className="h-1 w-[7px]" />
          </button>
        </div>
        <div className="flex">
          <StatusToggle label="Workspace" className="w-[22px]">
            <Icon>
              <circle cx="8" cy="8" r="4.200" stroke={LIGHT} strokeWidth="3" />
              <path d="M8 0v3M8 13v3M0 8h3M13 8h3M2.300 2.300l2.200 2.200M11.500 11.500l2.200 2.200M13.700 2.300l-2.200 2.200M4.500 11.500l-2.200 2.200" stroke={LIGHT} strokeWidth="2.500" />
            </Icon>
          </StatusToggle>
          <CaretButton label="Workspace settings" className="w-4" />
        </div>
        <StatusToggle label="Annotation monitor">
          <Plus className="size-4" />
        </StatusToggle>
        <StatusToggle label="Isolate objects">
          <Icon>
            <path d="M.5.5h6v6h-6zM7 9l3.500 6h-7z" stroke={LIGHT} />
            <circle cx="12.500" cy="7" r="3" stroke={LIGHT} />
          </Icon>
        </StatusToggle>
        <StatusToggle label="Clean screen">
          <Icon>
            <path d="M.5 2.500h15v11H.5z" stroke={LIGHT} strokeWidth="1.200" />
            <path d="M9 7l4-2.500M10 4.500h3V7M7 9l-4 2.500M3 9v2.500h3" stroke={LIGHT} />
          </Icon>
        </StatusToggle>
        <StatusToggle label="Customization">
          <MenuLines />
        </StatusToggle>
      </div>
    </footer>
  );
}

export default function App() {
  const [activeTab, setActiveTab] = useState("Home");

  return (
    <div className="flex min-h-screen bg-black px-[133px] font-['Open_Sans','Noto_Sans',sans-serif] text-[12px] leading-[16px]">
      <div className="flex min-w-0 flex-1 flex-col bg-[#222930]">
        <TitleBar />

        {/* Ribbon tabs */}
        <nav aria-label="Ribbon" className="flex h-5 items-center pr-[11px] pl-[2px] text-[11px] text-[#c3c8d0]">
          <div className="flex h-full flex-1 justify-between">
            {MENU_TABS.map((tab) => (
              <button
                key={tab}
                onClick={() => setActiveTab(tab)}
                className={clsx("px-[10px] whitespace-nowrap", tab === activeTab && "bg-[#3b4453] text-[#f0f0f0]")}
              >
                {tab}
              </button>
            ))}
          </div>
          <button aria-label="More tabs" className="ml-[3px]">
            <Icon className="size-2" box="0 0 8 8">
              <path d="M0 0l4 4-4 4zM4.500 0l4 4-4 4z" fill={LIGHT} />
            </Icon>
          </button>
          <button aria-label="Minimize ribbon" className="ml-[10px]">
            <Icon className="h-2 w-[15px]" box="0 0 15 8">
              <path d="M0 0h15v8H0z" fill="#f0f0f0" />
              <path d="M5 5.500h5L7.500 3z" fill="#222930" />
            </Icon>
          </button>
          <CaretButton label="Ribbon display" className="ml-[2px] w-2" />
        </nav>

        <Ribbon />
        <FileTabs />
        <CommandLine />
        <Viewport />
        <StatusBar />
        <div className="h-[6px] bg-[#5f5796]" />
      </div>
    </div>
  );
}
